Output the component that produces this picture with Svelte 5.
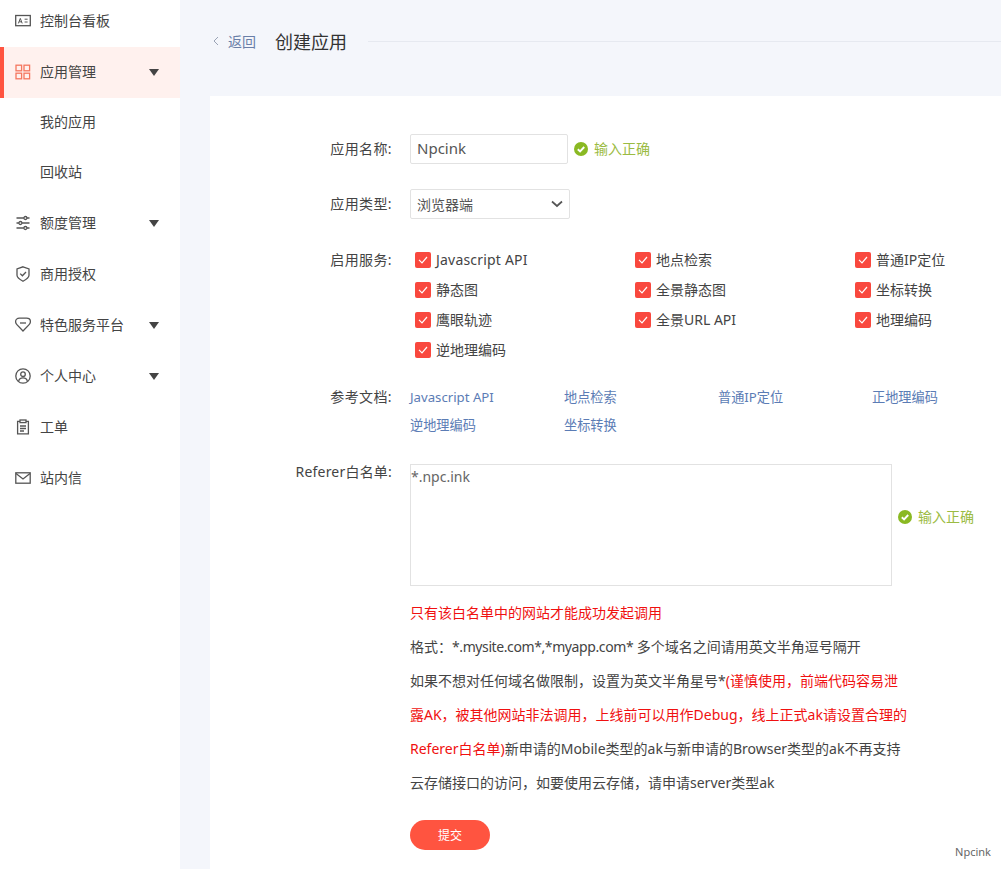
<script>
  const menu = [
    { label: "控制台看板", icon: "card" },
    { label: "应用管理", icon: "grid", arrow: true, active: true },
    { label: "我的应用", sub: true },
    { label: "回收站", sub: true },
    { label: "额度管理", icon: "sliders", arrow: true },
    { label: "商用授权", icon: "shield" },
    { label: "特色服务平台", icon: "gem", arrow: true },
    { label: "个人中心", icon: "user", arrow: true },
    { label: "工单", icon: "clip" },
    { label: "站内信", icon: "mail" }
  ];
  const services = [
    "Javascript API", "地点检索", "普通IP定位",
    "静态图", "全景静态图", "坐标转换",
    "鹰眼轨迹", "全景URL API", "地理编码",
    "逆地理编码"
  ];
  const docs = ["Javascript API", "地点检索", "普通IP定位", "正地理编码", "逆地理编码", "坐标转换"];
</script>

{#snippet okTip(cls = "")}
  <span class="ok {cls}">
    <svg width="14" height="14" viewBox="0 0 14 14">
      <circle cx="7" cy="7" r="7" fill="#8ab923" />
      <path d="M3.8 7.2l2.300 2.200 4.100-4.400" fill="none" stroke="#fff" stroke-width="1.900" />
    </svg>
    <span class="up">输入正确</span>
  </span>
{/snippet}

<div class="page">
  <aside class="side">
    <ul>
      {#each menu as item}
        <li class:active={item.active} class:sub={item.sub}>
          {#if item.icon}
            <svg class="ico" width="16" height="16" viewBox="0 0 16 16" fill="none" stroke="currentColor" stroke-width="1.300">
              {#if item.icon === "card"}
                <rect x="0.700" y="2.500" width="14.600" height="10.200" />
                <path stroke-width="1" d="M3.400 10.400l1.900-5 1.900 5M4.200 8.800h2.400M9.600 6.200h3M9.600 9h3" />
              {:else if item.icon === "grid"}
                <rect x="1" y="1.200" width="5.600" height="5.600" />
                <rect x="9" y="1.200" width="5.600" height="5.600" />
                <rect x="1" y="9.200" width="5.600" height="5.600" />
                <rect x="9" y="9.200" width="5.600" height="5.600" />
              {:else if item.icon === "sliders"}
                <path d="M1.500 3h7.400M12 3h2.500M1.500 8h2.400M7 8h7.500M1.500 13h7.400M12 13h2.500" />
                <circle cx="10.400" cy="3" r="1.500" />
                <circle cx="5.400" cy="8" r="1.500" />
                <circle cx="10.400" cy="13" r="1.500" />
              {:else if item.icon === "shield"}
                <path d="M8 .8l6 2.200v6.200c0 2.400-3.600 4.700-6 6-2.400-1.300-6-3.600-6-6V3z" />
                <path d="M5.200 7.600l2.200 2.200 3.600-3.800" />
              {:else if item.icon === "gem"}
                <path d="M4.400 1.200h7.200c2.200 0 3.800 1.600 3.800 3.500 0 1.200-.5 2.100-1.300 2.900L8 14 1.900 7.600C1.100 6.800.6 5.900.6 4.700c0-1.900 1.600-3.500 3.800-3.500z" />
                <path d="M5 6h6" />
              {:else if item.icon === "user"}
                <circle cx="8" cy="8" r="7.200" />
                <circle cx="8" cy="6.200" r="2.300" />
                <path d="M3.600 13.400c.4-2.400 2.200-3.500 4.400-3.500s4 1.100 4.400 3.500" />
              {:else if item.icon === "clip"}
                <path d="M5 2.400H2.600v12.400h10.800V2.400H11" />
                <rect x="5" y="1" width="6" height="2.600" />
                <path d="M5 7h6M5 9.500h6M5 12h4" />
              {:else}
                <rect x="0.800" y="2.800" width="14.400" height="10.400" />
                <path d="M1 3.400l7 5.600 7-5.600" />
              {/if}
            </svg>
          {/if}
          <span class="name">{item.label}</span>
          {#if item.arrow}<i class="arrow"></i>{/if}
        </li>
      {/each}
    </ul>
  </aside>

  <main class="main">
    <header class="head">
      <svg class="back-ico" width="6" height="10" viewBox="0 0 6 10" fill="none" stroke="#9aa3b5" stroke-width="1">
        <path d="M5 1L1 5l4 4" />
      </svg>
      <a class="back" href="#back">返回</a>
      <h1>创建应用</h1>
      <span class="rule"></span>
    </header>

    <section class="card">
      <div class="row r-name">
        <div class="lab">应用名称:</div>
        <div class="val inline">
          <input class="txt" value="Npcink" />
          {@render okTip()}
        </div>
      </div>

      <div class="row r-type">
        <div class="lab">应用类型:</div>
        <div class="val">
          <div class="sel">
            浏览器端
            <svg width="12" height="8" viewBox="0 0 12 8" fill="none" stroke="#555" stroke-width="1.700"><path d="M1 1.500l5 4.500 5-4.500" /></svg>
          </div>
        </div>
      </div>

      <div class="row r-serv">
        <div class="lab">启用服务:</div>
        <div class="val services">
          {#each services as s}
            <label class="chk">
              <span class="box">
                <svg width="10" height="8" viewBox="0 0 10 8" fill="none" stroke="#fff" stroke-width="1.200"><path d="M1 3.800l3 3L9 1" /></svg>
              </span>
              <span class="up" class:wide={s === "Javascript API"}>{s}</span>
            </label>
          {/each}
        </div>
      </div>

      <div class="row r-docs">
        <div class="lab">参考文档:</div>
        <div class="val docs">
          {#each docs as d}<a href="#doc">{d}</a>{/each}
        </div>
      </div>

      <div class="row r-ref">
        <div class="lab">Referer白名单:</div>
        <div class="val">
          <div class="inline">
            <textarea class="area">*.npc.ink</textarea>
            {@render okTip("high")}
          </div>
          <div class="notes">
            <p class="red">只有该白名单中的网站才能成功发起调用</p>
            <p>格式&#xFF1A;<span class="tight">*.mysite.com*,*myapp.com*</span> 多个域名之间请用英文半角逗号隔开</p>
            <p>如果不想对任何域名做限制&#xFF0C;设置为英文半角星号*<span class="red">(谨慎使用&#xFF0C;前端代码容易泄</span></p>
            <p class="red">露AK&#xFF0C;被其他网站非法调用&#xFF0C;上线前可以用作Debug&#xFF0C;线上正式ak请设置合理的</p>
            <p><span class="red">Referer白名单)</span>新申请的Mobile类型的ak与新申请的Browser类型的ak不再支持</p>
            <p>云存储接口的访问&#xFF0C;如要使用云存储&#xFF0C;请申请server类型ak</p>
          </div>
          <button class="submit">提交</button>
        </div>
      </div>

      <span class="brand">Npcink</span>
    </section>
  </main>
</div>

<style>
  :global(body) {
    margin: 0;
    background: #f4f6fb;
  }
  .page {
    display: flex;
    width: 1001px;
    height: 869px;
    overflow: hidden;
    font-family: "Noto Sans", "Noto Sans CJK SC", sans-serif;
    font-size: 14px;
    color: #444;
  }
  .side {
    width: 180px;
    flex: none;
    background: #fff;
    overflow: hidden;
  }
  ul {
    list-style: none;
    margin: -4.500px 0 0;
    padding: 0;
  }
  li {
    display: flex;
    align-items: center;
    height: 51px;
    padding-left: 15px;
    box-sizing: border-box;
    color: #444;
  }
  li.sub {
    height: 50px;
    padding-left: 40px;
  }
  li.sub .name {
    padding-bottom: 4px;
  }
  li.active {
    background: #fff1ee;
    box-shadow: inset 4px 0 0 #ff5440;
  }
  li.active .ico {
    color: #f5775f;
  }
  .ico {
    margin-right: 9px;
    color: #555;
    flex: none;
  }
  .name {
    flex: 1;
    padding-bottom: 2px;
  }
  .up {
    padding-bottom: 2px;
  }
  .wide {
    letter-spacing: .2px;
  }
  .tight {
    letter-spacing: -.4px;
  }
  .arrow {
    width: 0;
    height: 0;
    margin-right: 21px;
    border-left: 5px solid transparent;
    border-right: 5px solid transparent;
    border-top: 7px solid #444;
  }
  .main {
    flex: 1;
    min-width: 0;
    display: flex;
    flex-direction: column;
  }
  .head {
    display: flex;
    align-items: center;
    height: 42px;
    margin-bottom: 34px;
    padding: 20px 0 0 33px;
  }
  .back-ico {
    margin-right: 9px;
  }
  .back {
    color: #6a7fa8;
    text-decoration: none;
  }
  h1 {
    margin: 0 21px 0 19px;
    font-size: 18px;
    font-weight: 400;
    color: #333;
  }
  .rule {
    flex: 1;
    height: 1px;
    background: #e6e9f0;
  }
  .card {
    position: relative;
    flex: 1;
    margin-left: 30px;
    background: #fff;
  }
  .row {
    display: grid;
    grid-template-columns: 182px 1fr;
    column-gap: 18px;
  }
  .lab {
    text-align: right;
    color: #444;
    line-height: 20px;
    letter-spacing: .4px;
  }
  .inline {
    display: flex;
    align-items: center;
  }
  .r-name {
    padding-top: 38px;
    align-items: center;
  }
  .r-type {
    padding-top: 25px;
    align-items: center;
  }
  .r-serv {
    padding-top: 31px;
  }
  .r-docs {
    padding-top: 22px;
  }
  .r-ref {
    padding-top: 25px;
  }
  .r-ref .lab {
    margin-top: -2px;
    letter-spacing: .2px;
  }
  .txt {
    width: 158px;
    height: 30px;
    box-sizing: border-box;
    padding: 0 6px 2px;
    border: 1px solid #e2e2e2;
    border-radius: 2px;
    font: inherit;
    font-size: 15px;
    color: #555;
    outline: none;
  }
  .ok {
    display: inline-flex;
    align-items: center;
    gap: 6px;
    margin-left: 6px;
    color: #9bbb42;
  }
  .ok.high {
    margin-bottom: 17px;
  }
  .sel {
    display: flex;
    align-items: center;
    justify-content: space-between;
    width: 160px;
    height: 30px;
    box-sizing: border-box;
    padding: 0 6px;
    border: 1px solid #e2e2e2;
    border-radius: 2px;
    color: #555;
  }
  .services {
    display: grid;
    grid-template-columns: repeat(3, 220px);
    grid-auto-rows: 30px;
    margin-left: 5px;
    margin-top: -5px;
  }
  .chk {
    display: flex;
    align-items: center;
    gap: 5px;
    white-space: nowrap;
  }
  .box {
    display: flex;
    align-items: center;
    justify-content: center;
    width: 16px;
    height: 16px;
    border-radius: 2px;
    background: #f9483e;
  }
  .docs {
    display: grid;
    grid-template-columns: repeat(4, 154px);
    grid-auto-rows: 28px;
    margin-top: -4px;
    line-height: 28px;
    font-size: 13.200px;
  }
  .docs a {
    color: #5b7cb5;
    text-decoration: none;
    white-space: nowrap;
  }
  .area {
    display: block;
    width: 482px;
    height: 122px;
    box-sizing: border-box;
    margin: 0;
    padding: 2px 0 0 0;
    border: 1px solid #e2e2e2;
    font: inherit;
    color: #666;
    resize: none;
    outline: none;
  }
  .notes {
    padding-top: 10px;
  }
  .notes p {
    margin: 0;
    line-height: 34px;
    white-space: nowrap;
    color: #444;
  }
  .notes .red,
  .notes p.red {
    color: #f01010;
  }
  .submit {
    display: block;
    width: 80px;
    height: 30px;
    margin-top: 20px;
    border: 0;
    border-radius: 15px;
    background: #ff5440;
    color: #fff;
    font: inherit;
    font-size: 12px;
  }
  .brand {
    position: absolute;
    right: 10px;
    bottom: 10px;
    font-size: 11px;
    color: #666;
  }
</style>
